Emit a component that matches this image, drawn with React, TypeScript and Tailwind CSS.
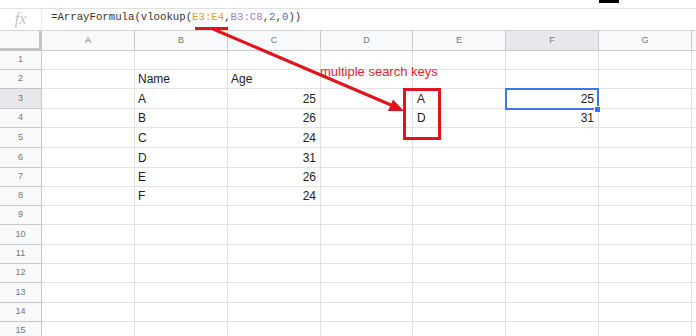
type Row = {
  n: number;
  h: string;
  B?: string;
  C?: string;
  E?: string;
  F?: string;
};

const rows: Row[] = [
  { n: 1, h: "h-[19px]" },
  { n: 2, h: "h-[19px]", B: "Name", C: "Age" },
  { n: 3, h: "h-[20px]", B: "A", C: "25", E: "A", F: "25" },
  { n: 4, h: "h-[19px]", B: "B", C: "26", E: "D", F: "31" },
  { n: 5, h: "h-[20px]", B: "C", C: "24" },
  { n: 6, h: "h-[20px]", B: "D", C: "31" },
  { n: 7, h: "h-[19px]", B: "E", C: "26" },
  { n: 8, h: "h-[19px]", B: "F", C: "24" },
  { n: 9, h: "h-[19px]" },
  { n: 10, h: "h-[20px]" },
  { n: 11, h: "h-[19px]" },
  { n: 12, h: "h-[19px]" },
  { n: 13, h: "h-[20px]" },
  { n: 14, h: "h-[19px]" },
  { n: 15, h: "h-[19px]" },
];

const columns = [
  { key: "A", w: "w-[93px]" },
  { key: "B", w: "w-[93px]" },
  { key: "C", w: "w-[93px]" },
  { key: "D", w: "w-[92px]" },
  { key: "E", w: "w-[93px]" },
  { key: "F", w: "w-[93px]" },
  { key: "G", w: "w-[93px]" },
] as const;

const cellFont = { fontFamily: '"Liberation Sans", Arial, sans-serif' };

export default function App() {
  return (
    <div className="relative w-[696px] h-[336px] overflow-hidden bg-white" style={cellFont}>
      {/* top toolbar strip */}
      <div className="h-[9px] border-b border-[#e0e0e0] bg-white" />

      {/* formula bar */}
      <div className="flex h-[22px] border-b border-[#d4d4d4] bg-white">
        <div className="flex w-[42px] items-center justify-center border-r border-[#ececec]">
          <span
            className="text-[16px] italic leading-none text-[#c4c4c4] pb-[2px]"
            style={{ fontFamily: '"Liberation Serif", "Times New Roman", serif' }}
          >
            fx
          </span>
        </div>
        <div
          className="flex items-center pl-[9px] pb-[4px] text-[10.7px] text-[#333]"
          style={{ fontFamily: '"Liberation Mono", "Courier New", monospace' }}
        >
          <span>=ArrayFormula(vlookup(</span>
          <span className="text-[#f09a2a]">E3:E4</span>
          <span>,</span>
          <span className="text-[#9a7fbf]">B3:C8</span>
          <span>,</span>
          <span className="text-[#3f6fc6]">2</span>
          <span>,</span>
          <span className="text-[#3f6fc6]">0</span>
          <span>))</span>
        </div>
      </div>

      {/* column headers */}
      <div className="flex h-[20px] bg-[#f8f9fa] text-[9px] text-[#777]">
        <div className="w-[42px] shrink-0 border-r-[3px] border-b-[3px] border-[#c4c4c4]" />
        {columns.map((c) => (
          <div
            key={c.key}
            className={`${c.w} shrink-0 flex items-center justify-center border-r border-b border-[#c8c8c8] ${
              c.key === "F" ? "bg-[#e6e8ec]" : ""
            }`}
          >
            {c.key}
          </div>
        ))}
        <div className="flex-1 border-b border-[#c8c8c8]" />
      </div>

      {/* grid rows */}
      {rows.map((r) => (
        <div key={r.n} className={`flex ${r.h}`}>
          <div
            className={`w-[42px] shrink-0 flex items-center justify-center border-r border-b border-[#c8c8c8] text-[9px] text-[#777] ${
              r.n === 3 ? "bg-[#e6e8ec]" : "bg-[#f8f9fa]"
            }`}
          >
            {r.n}
          </div>
          {columns.map((c) => {
            const value = (r as Record<string, unknown>)[c.key] as string | undefined;
            const numeric = value !== undefined && /^\d+$/.test(value);
            return (
              <div
                key={c.key}
                className={`${c.w} shrink-0 flex items-end pb-[1px] border-r border-b border-[#e2e2e2] text-[12px] leading-[15px] text-[#222] ${
                  numeric ? "justify-end pr-[4px]" : c.key === "E" ? "pl-[4px]" : "pl-[3px]"
                }`}
              >
                {value}
              </div>
            );
          })}
          <div className="flex-1 border-b border-[#e2e2e2]" />
        </div>
      ))}

      {/* selected cell F3 */}
      <div className="absolute left-[505px] top-[88px] w-[94px] h-[22px] border-2 border-[#3b78e7]" />
      <div className="absolute left-[594px] top-[106px] w-[7px] h-[7px] bg-[#3b78e7] border border-white" />

      {/* toolbar icon fragment at top */}
      <div className="absolute left-[599px] top-0 w-[20px] h-[3px] bg-black" />

      {/* annotation */}
      <div className="absolute left-[320px] top-[64px] text-[13px] leading-[16px] text-[#e2262e]">
        multiple search keys
      </div>
      <div className="absolute left-[403px] top-[88px] w-[38px] h-[52px] border-[3px] border-[#e0141c]" />

      <svg className="absolute left-0 top-0 pointer-events-none" width="696" height="336" viewBox="0 0 696 336">
        <rect x="195" y="27" width="33" height="3" fill="#e0141c" />
        <line x1="213" y1="29" x2="391" y2="105" stroke="#e0141c" strokeWidth="3" />
        <polygon points="404,111 388,111 393,99.5" fill="#e0141c" />
      </svg>
    </div>
  );
}
